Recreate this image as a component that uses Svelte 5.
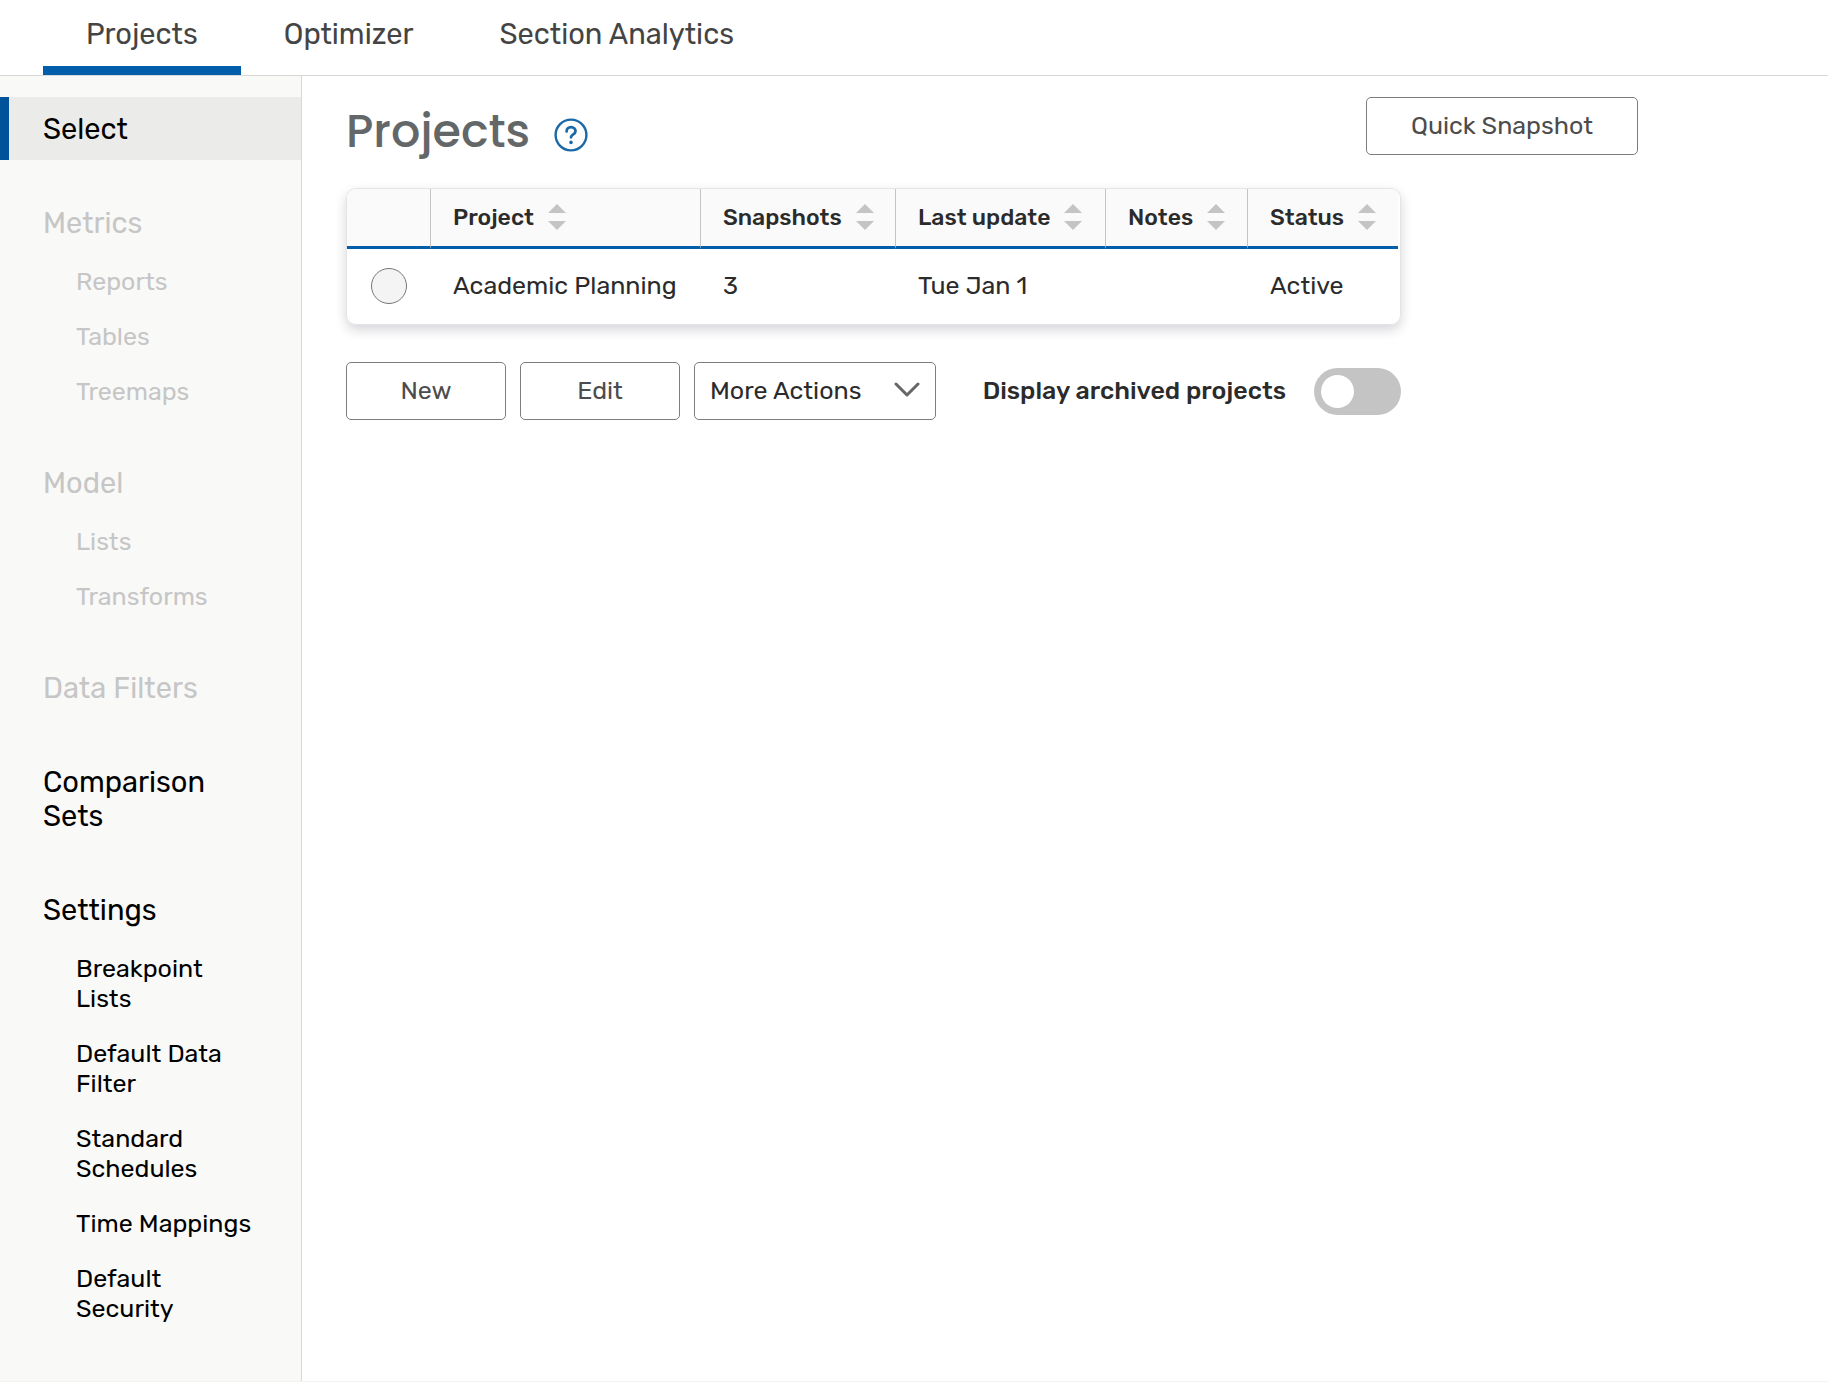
<script>
  const tabs = ["Projects", "Optimizer", "Section Analytics"];

  const sections = [
    { label: "Select" },
    {
      label: "Metrics",
      disabled: true,
      items: ["Reports", "Tables", "Treemaps"]
    },
    { label: "Model", disabled: true, items: ["Lists", "Transforms"] },
    { label: "Data Filters", disabled: true },
    { label: "Comparison Sets" },
    {
      label: "Settings",
      items: [
        "Breakpoint Lists",
        "Default Data Filter",
        "Standard Schedules",
        "Time Mappings",
        "Default Security"
      ]
    }
  ];

  const columns = [
    { key: "name", label: "Project" },
    { key: "snapshots", label: "Snapshots" },
    { key: "updated", label: "Last update" },
    { key: "notes", label: "Notes" },
    { key: "status", label: "Status" }
  ];

  const projects = [
    {
      id: 1,
      name: "Academic Planning",
      snapshots: 3,
      updated: "Tue Jan 1",
      notes: "",
      status: "Active"
    }
  ];

  let activeTab = $state("Projects");
  let activeSection = $state("Select");
  let selected = $state(null);
  let showArchived = $state(false);
  let sortKey = $state("name");
  let ascending = $state(true);

  let rows = $derived(
    [...projects].sort((a, b) => {
      const order = String(a[sortKey]).localeCompare(String(b[sortKey]));
      return ascending ? order : -order;
    })
  );

  const handleSort = key => {
    ascending = key === sortKey ? !ascending : true;
    sortKey = key;
  };
</script>

<div class="app">
  <nav class="tabs" aria-label="Main">
    {#each tabs as tab}
      <a
        href="#{tab}"
        class:active={tab === activeTab}
        onclick={() => (activeTab = tab)}>{tab}</a>
    {/each}
  </nav>

  <div class="body">
    <nav class="sidebar" aria-label="Projects">
      {#each sections as { label, disabled, items }}
        <section class:disabled class:active={label === activeSection}>
          <a
            class="head"
            href={disabled ? undefined : `#${label}`}
            aria-disabled={disabled}
            onclick={() => !disabled && (activeSection = label)}>{label}</a>
          {#if items}
            <ul>
              {#each items as item}
                <li>
                  <a href={disabled ? undefined : `#${item}`}>{item}</a>
                </li>
              {/each}
            </ul>
          {/if}
        </section>
      {/each}
    </nav>

    <main>
      <header>
        <h1>Projects</h1>
        <button class="help" aria-label="Help">
          <svg viewBox="0 0 34 34" width="34" height="34" fill="none" stroke="currentColor">
            <circle cx="17" cy="17" r="15.4" stroke-width="2.4" />
            <path
              d="M12.6 13.4c0-2.5 1.9-4.2 4.4-4.2s4.5 1.7 4.5 4.1c0 3.2-4.5 3-4.5 6"
              stroke-width="2.8"
              stroke-linecap="round"
              stroke-linejoin="round" />
            <circle cx="17" cy="24.4" r="1.8" fill="currentColor" stroke="none" />
          </svg>
        </button>
        <button class="btn">Quick Snapshot</button>
      </header>

      <div class="content">
        <div class="card">
          <table>
            <thead>
              <tr>
                <th class="pick"></th>
                {#each columns as { key, label }}
                  <th class={key}>
                    <button onclick={() => handleSort(key)}>
                      {label}
                      <svg viewBox="0 0 18 26" width="18" height="26" fill="#c4c4c4">
                        <path d="M9 0l9 9H0z" />
                        <path d="M0 17h18l-9 9z" />
                      </svg>
                    </button>
                  </th>
                {/each}
              </tr>
            </thead>
            <tbody>
              {#each rows as project (project.id)}
                <tr>
                  <td class="pick">
                    <input
                      type="radio"
                      name="project"
                      aria-label={project.name}
                      value={project.id}
                      bind:group={selected} />
                  </td>
                  {#each columns as { key }}
                    <td>{project[key]}</td>
                  {/each}
                </tr>
              {/each}
            </tbody>
          </table>
        </div>

        <div class="actions">
          <button class="btn">New</button>
          <button class="btn">Edit</button>
          <div class="select">
            <select aria-label="More Actions">
              <option>More Actions</option>
            </select>
            <svg viewBox="0 0 26 16" width="26" height="16" fill="none">
              <path
                d="M2 2l11 11L24 2"
                stroke="#666"
                stroke-width="3"
                stroke-linecap="round"
                stroke-linejoin="round" />
            </svg>
          </div>
          <label for="archived">Display archived projects</label>
          <input
            id="archived"
            class="toggle"
            type="checkbox"
            role="switch"
            bind:checked={showArchived} />
        </div>
      </div>
    </main>
  </div>
</div>

<style>
  :global(body) {
    margin: 0;
    background-color: white;
  }
  .app {
    --cl-blue: #005eaa;
    --cl-text: #2b2b2b;
    --cl-line: #d8d8d8;

    min-height: 100vh;
    display: flex;
    flex-direction: column;
    border-bottom: 1px solid #f3f3f3;

    font-family: Rubik, Roboto, sans-serif;
    font-size: 25px;
    line-height: 30px;
    color: var(--cl-text);
  }
  .app,
  .app * {
    box-sizing: border-box;
  }
  a {
    color: inherit;
    text-decoration: none;
  }
  button,
  select {
    font: inherit;
    color: inherit;
    cursor: pointer;
  }

  .tabs {
    display: flex;
    padding-left: 43px;
    border-bottom: 1px solid var(--cl-line);
  }
  .tabs > a {
    padding: 17px 43px 15px;
    border-bottom: 9px solid transparent;
    font-size: 29px;
    line-height: 34px;
    color: #444;
  }
  .tabs > a.active {
    border-color: var(--cl-blue);
  }

  .body {
    flex: 1;
    display: flex;
  }
  .sidebar {
    flex: none;
    width: 302px;
    padding: 21px 0 44px;
    border-right: 1px solid var(--cl-line);
    background-color: #f9f9f8;
    color: black;

    display: flex;
    flex-direction: column;
    gap: 31px;
  }
  .sidebar a {
    display: block;
  }
  .head {
    padding: 15px 60px 14px 34px;
    border-left: 9px solid transparent;
    font-size: 29px;
    line-height: 34px;
  }
  .active > .head {
    border-color: #00539b;
    background-color: #ebebea;
  }
  .disabled {
    color: #c6c6c6;
  }
  ul {
    margin: 0;
    padding: 0 0 1px;
    list-style: none;
  }
  li > a {
    padding: 13px 44px 12px 76px;
  }

  main {
    flex: 1;
    padding: 21px 190px 44px 44px;
  }
  header {
    display: flex;
    align-items: flex-start;
    margin-bottom: 23px;
  }
  h1 {
    margin: 0;
    font-family: Poppins, Roboto, sans-serif;
    font-size: 46px;
    line-height: 68px;
    font-weight: 500;
    color: #646768;
  }
  .help {
    display: flex;
    margin: 21px auto 0 24px;
    padding: 0;
    border: none;
    background: none;
    color: #1a69a8;
  }
  .btn,
  select {
    height: 58px;
    border: 1px solid #7d7d7d;
    border-radius: 5px;
    background-color: white;
  }
  .btn {
    min-width: 160px;
    padding: 0 44px;
    color: #4c4c4c;
  }

  .content {
    width: max-content;
  }
  .card {
    padding-right: 2px;
    border: 1px solid #e4e4e6;
    border-radius: 10px;
    overflow: hidden;
    box-shadow: 0 5px 12px rgba(30, 30, 50, 0.18);
  }
  table {
    border-collapse: separate;
    border-spacing: 0;
    table-layout: fixed;
    width: 1051px;
  }
  th,
  td {
    padding: 0 0 2px 22px;
    text-align: left;
  }
  th {
    height: 60px;
    border-bottom: 3px solid var(--cl-blue);
    border-right: 1px solid #c4c4c4;
    background-color: #fafafa;
  }
  th:last-child {
    border-right: none;
  }
  td {
    height: 75px;
  }
  th > button {
    display: flex;
    align-items: center;
    gap: 14px;
    padding: 0;
    border: none;
    background: none;
    font-size: 23px;
    font-weight: 500;
    white-space: nowrap;
  }
  .pick {
    width: 84px;
    padding: 0 0 2px;
    text-align: center;
  }
  .name {
    width: 270px;
  }
  .snapshots {
    width: 195px;
  }
  .updated {
    width: 210px;
  }
  .notes {
    width: 142px;
  }
  input {
    appearance: none;
    margin: 0;
    cursor: pointer;
  }
  td > input {
    display: block;
    width: 36px;
    height: 36px;
    margin: 0 auto;
    border: 1px solid #767676;
    border-radius: 50%;
    background-color: #f4f4f4;
  }
  td > input:checked {
    border: 10px solid var(--cl-blue);
  }

  .actions {
    display: flex;
    align-items: center;
    gap: 14px;
    margin-top: 37px;
  }
  .select {
    position: relative;
  }
  select {
    appearance: none;
    display: block;
    width: 242px;
    padding: 0 60px 0 15px;
  }
  .select > svg {
    position: absolute;
    right: 16px;
    top: 20px;
    pointer-events: none;
  }
  label {
    margin-left: auto;
    margin-right: 14px;
    font-weight: 500;
    cursor: pointer;
  }
  .toggle {
    width: 87px;
    height: 47px;
    padding: 7px;
    border-radius: 24px;
    background-color: #c4c4c4;
  }
  .toggle::before {
    content: "";
    display: block;
    width: 33px;
    height: 33px;
    border-radius: 50%;
    background-color: white;
    transition: transform 0.15s cubic-bezier(0, 0, 0.2, 1);
  }
  .toggle:checked {
    background-color: var(--cl-blue);
  }
  .toggle:checked::before {
    transform: translateX(40px);
  }
</style>
